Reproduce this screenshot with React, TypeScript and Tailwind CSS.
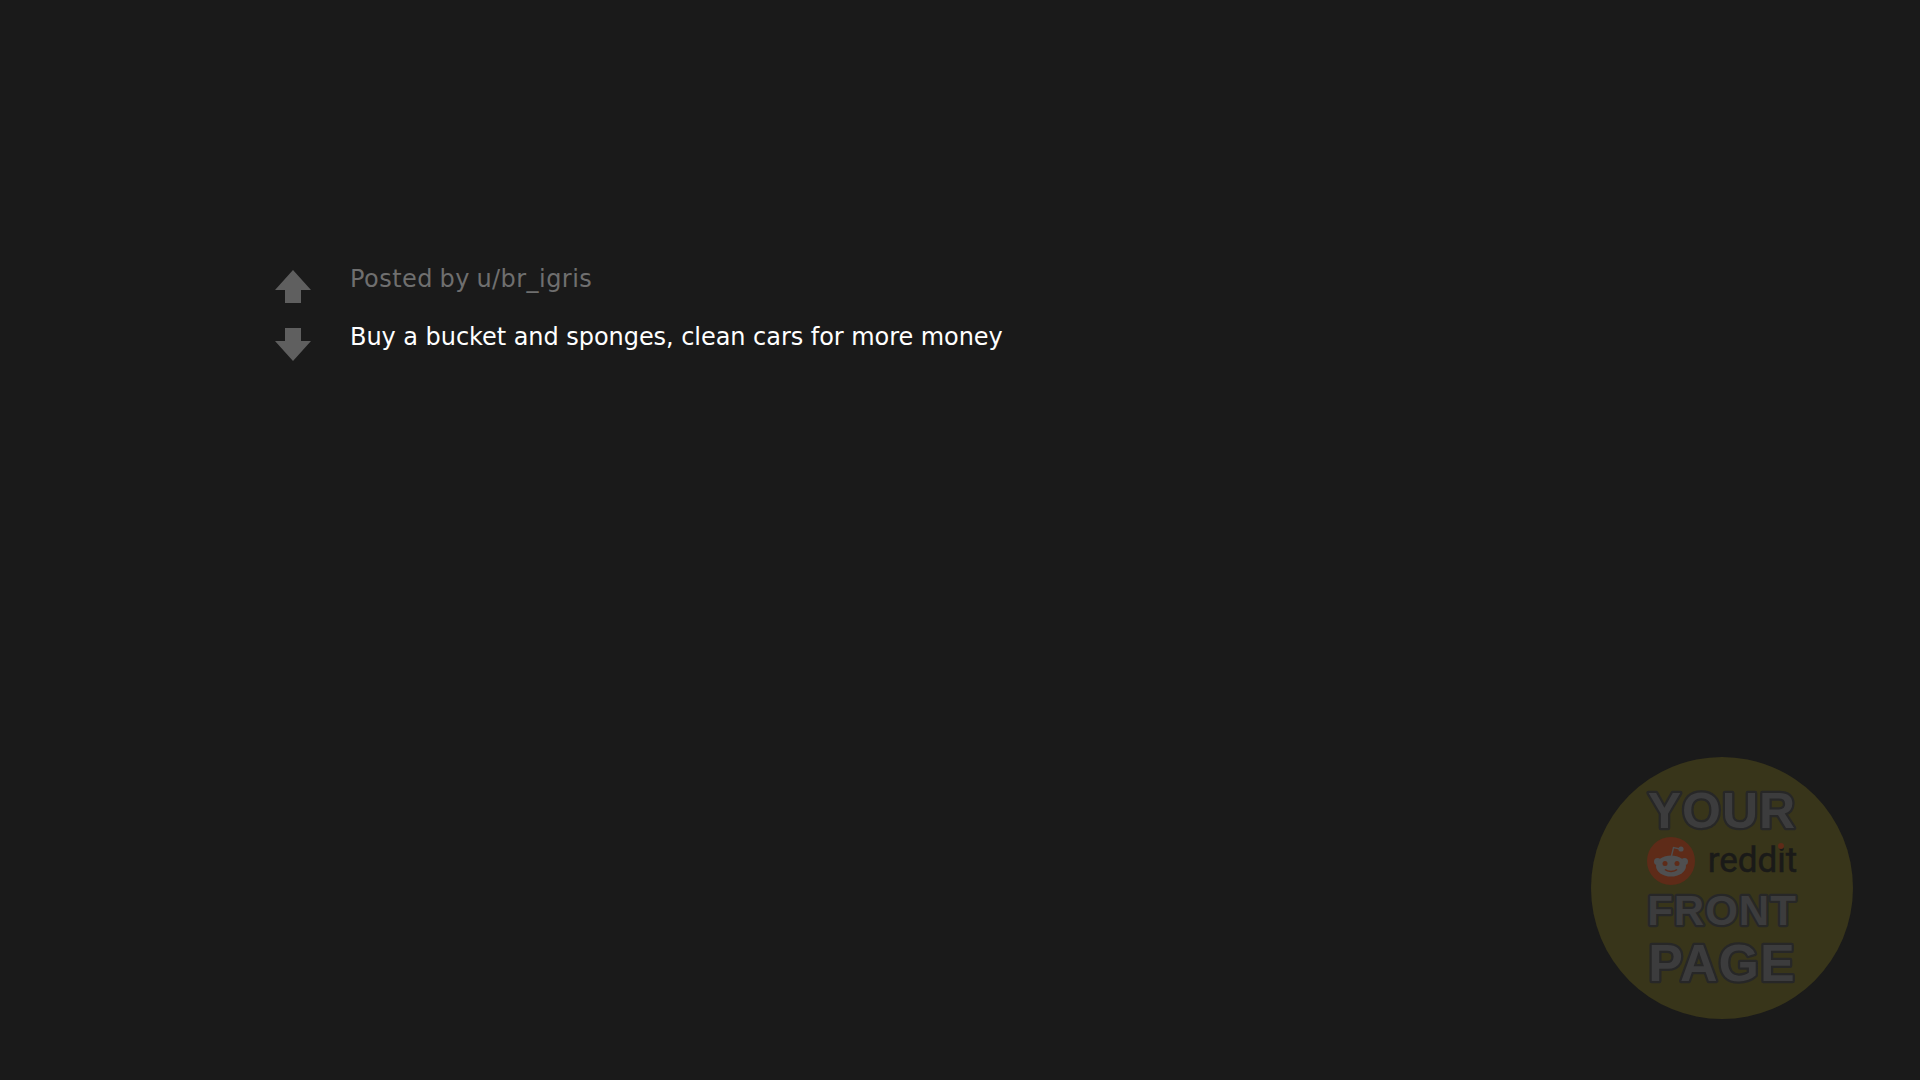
import React from 'react';

const sans = 'font-["DejaVu_Sans",sans-serif]';

const VoteArrow: React.FC<{ down?: boolean }> = ({ down }) => (
  <svg width="36" height="34" viewBox="0 0 36 34" className="block">
    <path
      d={down ? 'M10 0H26V13H36L18 33L0 13H10Z' : 'M18 0L36 20H26V33H10V20H0Z'}
      fill="#5f5f5f"
    />
  </svg>
);

// outlined lettering of the badge, svg because of the round stroke joins
const BadgeWord: React.FC<{ text: string; size: number; height: number; baseline: number; className?: string }> = ({
  text,
  size,
  height,
  baseline,
  className,
}) => (
  <svg width="180" height={height} viewBox={`0 0 180 ${height}`} className={`block ${className ?? ''}`}>
    <text
      x="90"
      y={baseline}
      textAnchor="middle"
      fontSize={size}
      fontWeight="700"
      letterSpacing="1"
      fontFamily="'Liberation Sans', sans-serif"
      fill="#3c3c3d"
      stroke="#272727"
      strokeWidth="4.5"
      strokeLinejoin="round"
      paintOrder="stroke"
    >
      {text}
    </text>
  </svg>
);

const Snoo = () => (
  <svg width="48" height="48" viewBox="0 0 48 48" className="block">
    <circle cx="24" cy="24" r="24" fill="#5e2b18" />
    <g fill="#4f4f50">
      <circle cx="10.5" cy="24.5" r="3.5" />
      <circle cx="37.5" cy="24.5" r="3.5" />
      <ellipse cx="24" cy="29" rx="15" ry="10.5" />
      <circle cx="34" cy="12" r="2.6" />
    </g>
    <path d="M24.5 19L26.5 10.5L33 12" fill="none" stroke="#4f4f50" strokeWidth="1.4" />
    <circle cx="18" cy="26.5" r="2.5" fill="#5e2b18" />
    <circle cx="30" cy="26.5" r="2.5" fill="#5e2b18" />
    <path d="M18 32.5C20.5 35 27.5 35 30 32.5" fill="none" stroke="#5e2b18" strokeWidth="1.5" />
  </svg>
);

export default function App() {
  return (
    <div className={`relative h-[1080px] w-[1920px] overflow-hidden bg-[#1a1a1a] ${sans}`}>
      <div className="flex pl-[275px] pt-[262px]">
        <div className="flex w-[75px] flex-col gap-[24px] pt-[8px]">
          <VoteArrow />
          <VoteArrow down />
        </div>
        <div className="flex flex-col gap-[30px] pt-[3px] text-[24px] leading-[28px]">
          <p className="tracking-[0.45px] [word-spacing:-1.5px] text-[#6f6f6f]">Posted by u/br_igris</p>
          <p className="tracking-[-0.05px] text-white">Buy a bucket and sponges, clean cars for more money</p>
        </div>
      </div>

      <div className="absolute bottom-[61px] right-[67px] flex h-[262px] w-[262px] flex-col items-center rounded-full bg-[#38351a] pt-[23px]">
        <BadgeWord text="YOUR" size={50} height={60} baseline={48} />
        <div className="relative -mt-[3px] flex items-center gap-[13px]">
          <Snoo />
          <span className='relative font-["Roboto",sans-serif] text-[35px] font-normal leading-[48px] text-[#1a1a18] [-webkit-text-stroke:0.5px_#1a1a18]'>
            reddit
            <span className="absolute right-[13px] top-[6px] h-[6px] w-[6px] rounded-full bg-[#5e2b18]" />
          </span>
        </div>
        <BadgeWord text="FRONT" size={42} height={50} baseline={40} />
        <BadgeWord text="PAGE" size={52} height={62} baseline={50} className="-mt-[4px]" />
      </div>
    </div>
  );
}
